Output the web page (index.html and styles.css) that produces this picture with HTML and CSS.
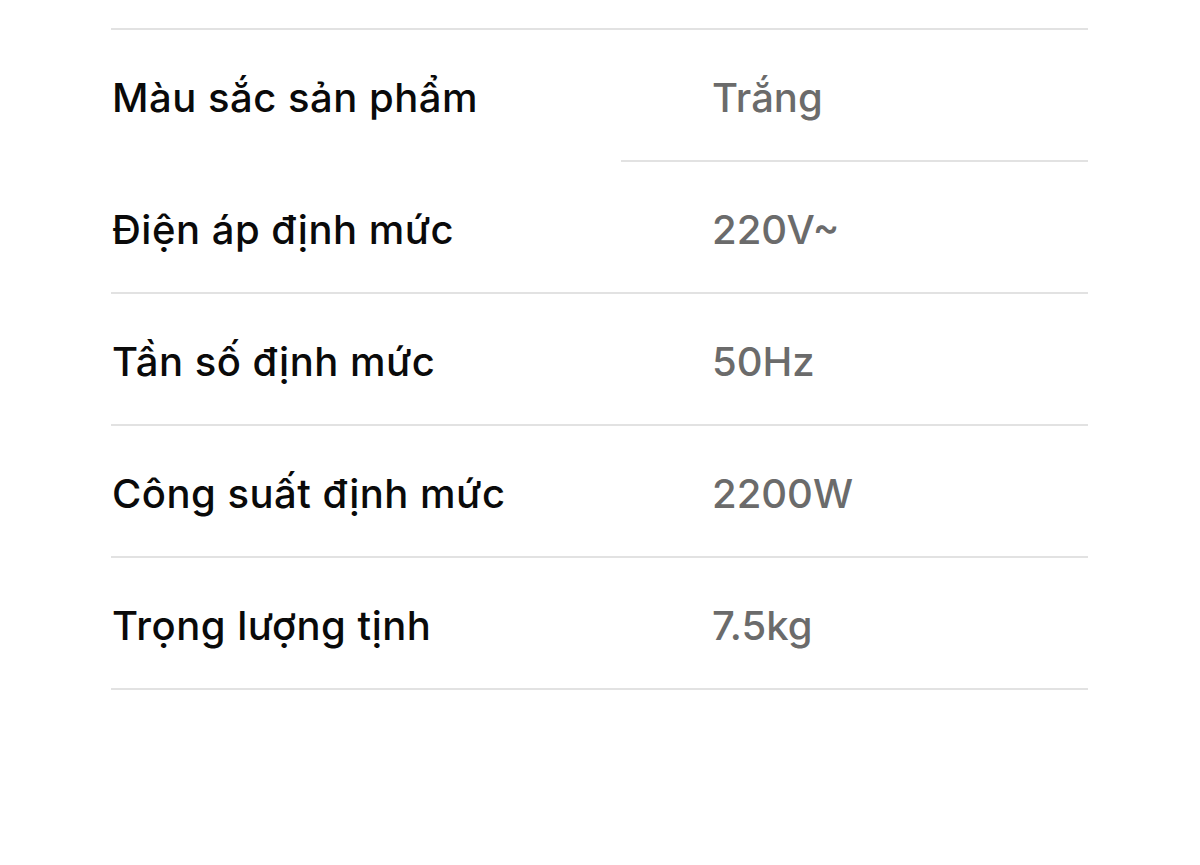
FILE: index.html
```html
<!DOCTYPE html>
<html lang="vi">
<head>
<meta charset="utf-8">
<title>Thông số sản phẩm</title>
<link rel="stylesheet" href="styles.css">
</head>
<body>
<div class="specs">
  <div class="row first">
    <div class="label">Màu sắc sản phẩm</div>
    <div class="value">Trắng</div>
  </div>
  <div class="row">
    <div class="label">Điện áp định mức</div>
    <div class="value">220V~</div>
  </div>
  <div class="row">
    <div class="label">Tần số định mức</div>
    <div class="value">50Hz</div>
  </div>
  <div class="row">
    <div class="label">Công suất định mức</div>
    <div class="value">2200W</div>
  </div>
  <div class="row">
    <div class="label">Trọng lượng tịnh</div>
    <div class="value">7.5kg</div>
  </div>
</div>
</body>
</html>
```
FILE: styles.css
```css
html, body {
  margin: 0;
  padding: 0;
  background: #fff;
}
body {
  padding: 28px 112px 0 111px;
  font-family: "Inter", "Noto Sans", sans-serif;
}
.specs {
  width: 977px;
  border-top: 2px solid #e2e2e2;
}
.row {
  display: grid;
  grid-template-columns: 510px 467px;
  height: 132px;
}
.label, .value {
  display: flex;
  align-items: center;
  border-bottom: 2px solid #e2e2e2;
  font-size: 40px;
  font-weight: 500;
  letter-spacing: 0.5px;
  padding-top: 5px;
}
.label {
  color: #0a0a0a;
  padding-left: 1px;
}
.value {
  color: #6b6b6b;
  padding-left: 91px;
  letter-spacing: 0;
}
.row.first .label {
  border-bottom-color: transparent;
}
```
